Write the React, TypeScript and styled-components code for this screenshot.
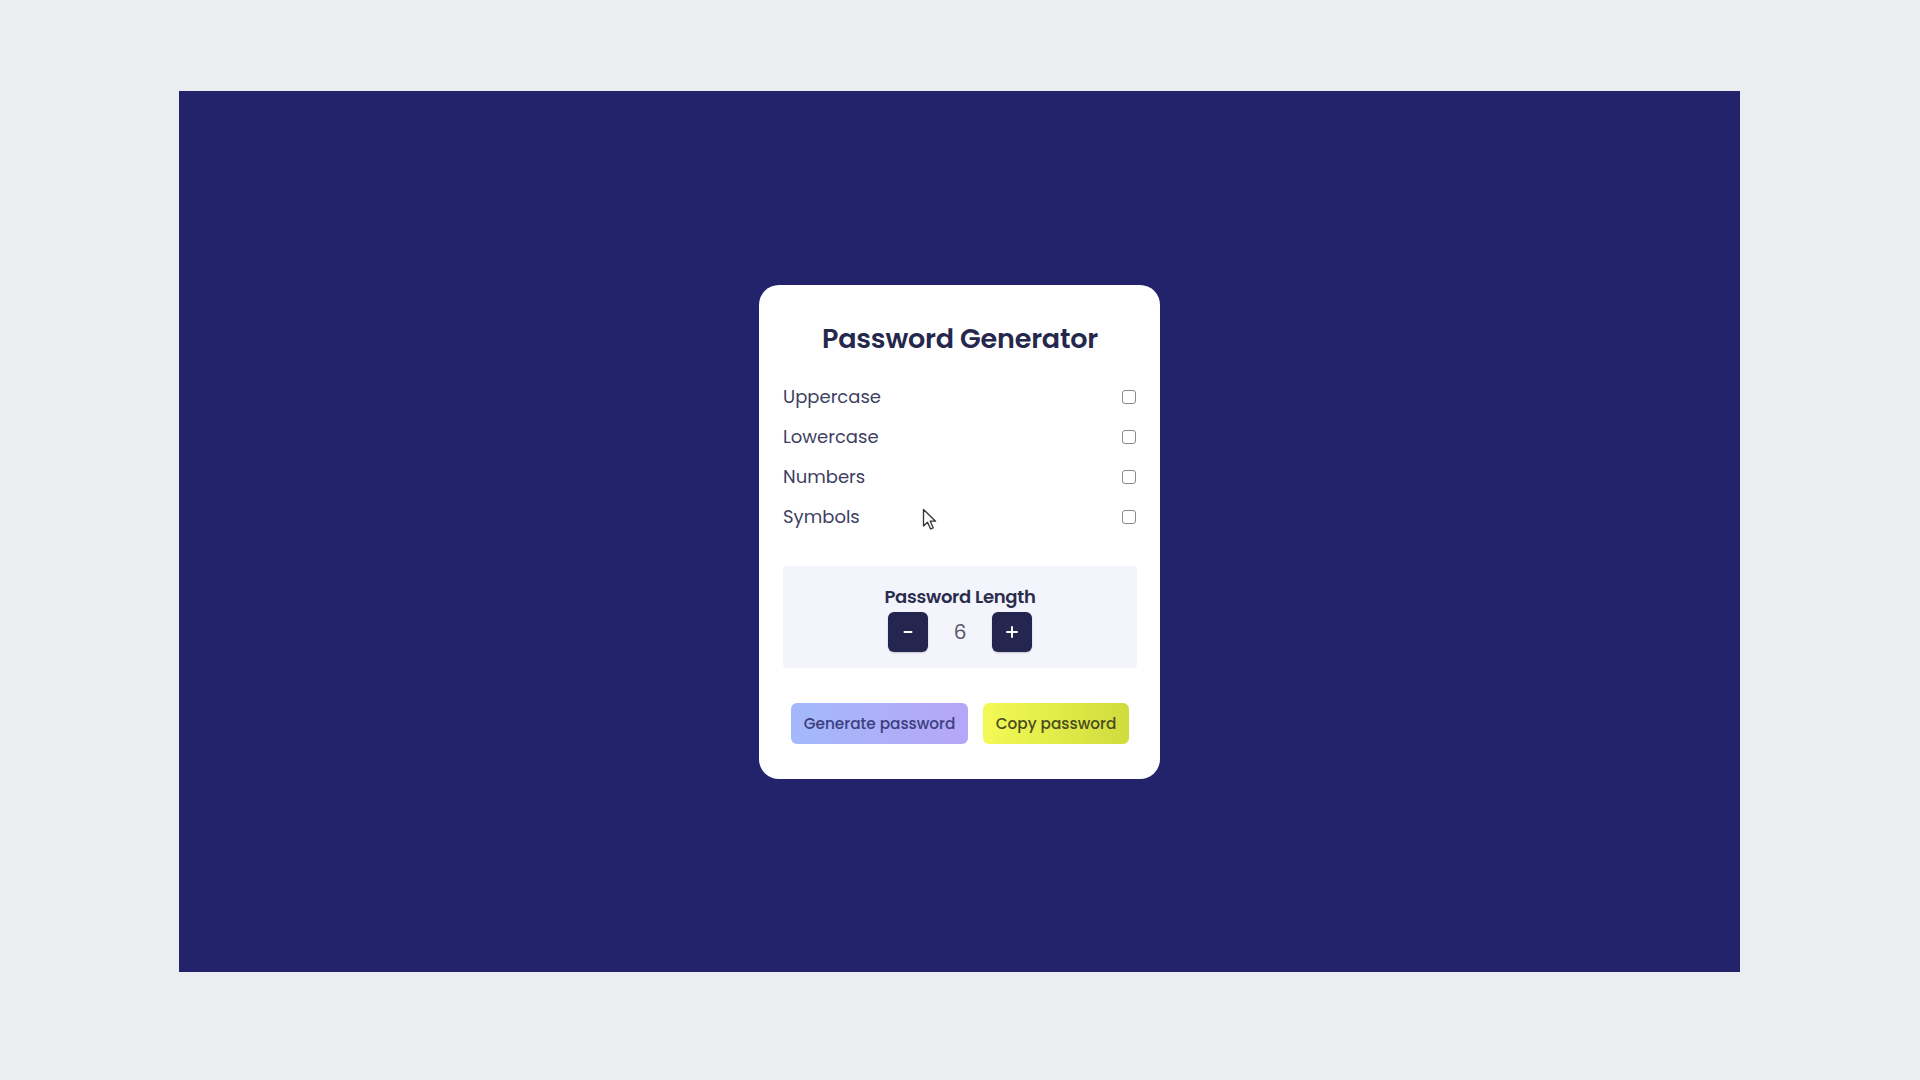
import React from "react";
import styled, { createGlobalStyle } from "styled-components";

const Global = createGlobalStyle`
  html, body { margin: 0; padding: 0; background: #ebeef1; }
  body { font-family: "Poppins", "Open Sans", "Noto Sans", sans-serif; }
`;

const Page = styled.div`
  width: 1920px;
  height: 1080px;
  padding: 91px 0 0 179px;
  box-sizing: border-box;
`;

const Stage = styled.main`
  width: 1561px;
  height: 881px;
  background: #22236a;
  display: flex;
  align-items: center;
  justify-content: center;
`;

const Card = styled.section`
  position: relative;
  width: 401px;
  height: 494px;
  box-sizing: border-box;
  background: #ffffff;
  border-radius: 20px;
  padding: 36px 23px 35px 24px;
  display: flex;
  flex-direction: column;
`;

const Title = styled.h1`
  margin: 0 0 20px;
  text-align: center;
  font-size: 27px;
  line-height: 36px;
  font-weight: 600;
  color: #25274c;
  letter-spacing: -0.2px;
`;

const OptionList = styled.div`
  display: flex;
  flex-direction: column;
`;

const Option = styled.label`
  height: 40px;
  display: flex;
  align-items: center;
  justify-content: space-between;
  font-size: 18px;
  color: #3d4062;
`;

const Box = styled.span`
  width: 12px;
  height: 12px;
  border: 1.6px solid #8a8a8e;
  border-radius: 3px;
  margin-right: 1px;
`;

const LengthPanel = styled.div`
  margin-top: 29px;
  height: 102px;
  box-sizing: border-box;
  padding: 19px 0 16px;
  background: #f3f4fc;
  border-radius: 4px;
  display: flex;
  flex-direction: column;
  align-items: center;
  gap: 4px;
`;

const LengthLabel = styled.div`
  font-size: 18px;
  line-height: 23px;
  font-weight: 600;
  color: #2a2c4e;
  letter-spacing: -0.3px;
`;

const Stepper = styled.div`
  display: flex;
  align-items: center;
`;

const StepButton = styled.button`
  width: 40px;
  height: 40px;
  border: none;
  border-radius: 6px;
  background: #25264f;
  color: #ffffff;
  display: flex;
  align-items: center;
  justify-content: center;
  padding: 0;
  box-shadow: 0 1px 2px rgba(0, 0, 0, 0.2);
`;

const Count = styled.span`
  width: 64px;
  text-align: center;
  font-size: 20px;
  color: #58596a;
`;

const Actions = styled.div`
  margin-top: 35px;
  display: flex;
  justify-content: center;
  gap: 15px;
`;

const ActionButton = styled.button<{ $variant: "generate" | "copy" }>`
  height: 41px;
  border: none;
  border-radius: 6px;
  font-family: inherit;
  font-size: 15.3px;
  font-weight: 500;
  padding: 0;
  width: ${(p) => (p.$variant === "generate" ? "177px" : "146px")};
  color: ${(p) => (p.$variant === "generate" ? "#3c4080" : "#4a4c1f")};
  background: ${(p) =>
    p.$variant === "generate"
      ? "linear-gradient(90deg, #a3b9fb 0%, #b6a6f7 100%)"
      : "linear-gradient(90deg, #f3fa57 0%, #cfdc3c 100%)"};
`;

const Cursor = styled.svg`
  position: absolute;
  left: 163px;
  top: 223px;
  pointer-events: none;
`;

const options = ["Uppercase", "Lowercase", "Numbers", "Symbols"];

export default function App() {
  return (
    <>
      <Global />
      <Page>
        <Stage>
          <Card>
            <Title>Password Generator</Title>
            <OptionList>
              {options.map((o) => (
                <Option key={o}>
                  {o}
                  <Box />
                </Option>
              ))}
            </OptionList>
            <LengthPanel>
              <LengthLabel>Password Length</LengthLabel>
              <Stepper>
                <StepButton aria-label="decrease">
                  <svg width="12" height="12" viewBox="0 0 12 12">
                    <path d="M2.5 6h7" stroke="#fff" strokeWidth="2" strokeLinecap="round" />
                  </svg>
                </StepButton>
                <Count>6</Count>
                <StepButton aria-label="increase">
                  <svg width="14" height="14" viewBox="0 0 14 14">
                    <path d="M7 2v10M2 7h10" stroke="#fff" strokeWidth="2" strokeLinecap="round" />
                  </svg>
                </StepButton>
              </Stepper>
            </LengthPanel>
            <Actions>
              <ActionButton $variant="generate">Generate password</ActionButton>
              <ActionButton $variant="copy">Copy password</ActionButton>
            </Actions>
            <Cursor width="16" height="24" viewBox="0 0 16 24">
              <path
                d="M1.5 1.5 L1.5 18 L5.5 14.2 L8.6 21 L11.2 19.8 L8.2 13.2 L13.6 13.2 Z"
                fill="#ffffff"
                stroke="#333"
                strokeWidth="1.3"
                strokeLinejoin="round"
              />
            </Cursor>
          </Card>
        </Stage>
      </Page>
    </>
  );
}
